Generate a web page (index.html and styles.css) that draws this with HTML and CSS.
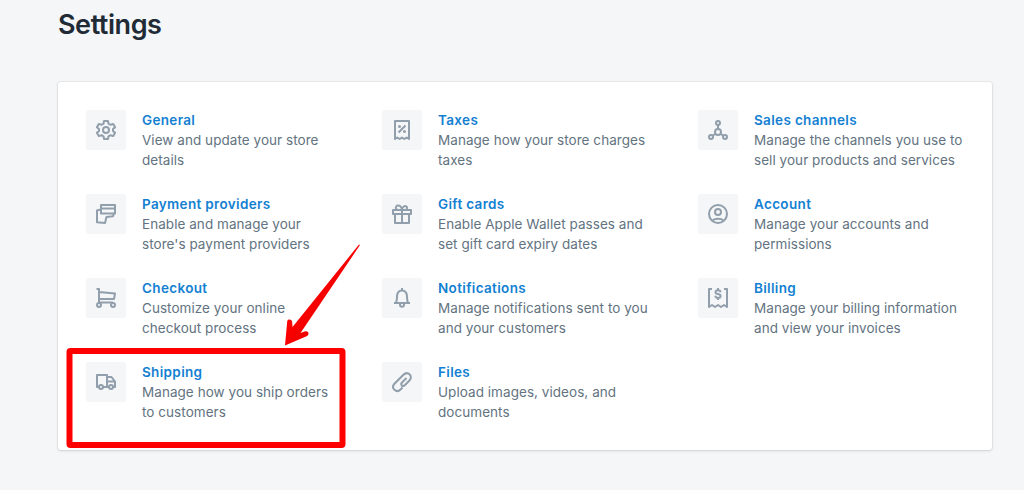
FILE: index.html
```html
<!DOCTYPE html>
<html lang="en">
<head>
<meta charset="utf-8">
<title>Settings</title>
<link rel="stylesheet" href="styles.css">
</head>
<body>
<main class="page">
  <h1 class="title">Settings</h1>
  <section class="card">
    <div class="column">
      <a class="item">
        <span class="tile"><svg class="icon" viewBox="0 0 20 20"><path d="M8 1h4l.5 2.700 2 1.100 2.700-.9 1.900 3.300-2.100 1.900v1.800l2.100 1.900-1.900 3.300-2.700-.9-2 1.100L12 19H8l-.5-2.700-2-1.100-2.700.9-1.900-3.300L3 10.900V9.100L.9 7.200l1.900-3.300 2.700.9 2-1.100z"/><circle cx="10" cy="10" r="3"/></svg></span>
        <span class="copy"><b class="name">General</b><span class="desc">View and update your store<br>details</span></span>
      </a>
      <a class="item">
        <span class="tile"><svg class="icon" viewBox="0 0 20 20"><path d="M5 1h14v8.500H5zM5 4.500h14M4.500 5.500L1 6.500V18.300l8 .7 1.500-6 6.500-.8 1-2.700"/></svg></span>
        <span class="copy"><b class="name">Payment providers</b><span class="desc">Enable and manage your<br>store's payment providers</span></span>
      </a>
      <a class="item">
        <span class="tile"><svg class="icon" viewBox="0 0 20 20"><path d="M.5 1H3v13.500h14M3 4l16 1.500-1 5.500H3"/><circle cx="3" cy="17" r="2"/><circle cx="17" cy="17" r="2"/></svg></span>
        <span class="copy"><b class="name">Checkout</b><span class="desc">Customize your online<br>checkout process</span></span>
      </a>
      <a class="item">
        <span class="tile"><svg class="icon" viewBox="0 0 20 20"><path d="M3 15H1V3h10v12H7M11 5h4.500L19 9.500V15h-2M11 9.500h8M11 15h2"/><circle cx="5" cy="15" r="2"/><circle cx="15" cy="15" r="2"/></svg></span>
        <span class="copy"><b class="name">Shipping</b><span class="desc">Manage how you ship orders<br>to customers</span></span>
      </a>
    </div>
    <div class="column">
      <a class="item">
        <span class="tile"><svg class="icon" viewBox="0 0 20 20"><path d="M3 19V1h14v18l-2.300-1.500L12.300 19 10 17.500 7.700 19l-2.400-1.500zM13.500 5.500l-7 7"/><circle class="dot" cx="7.500" cy="6.500" r="1.500"/><circle class="dot" cx="12.500" cy="11.500" r="1.500"/></svg></span>
        <span class="copy"><b class="name">Taxes</b><span class="desc">Manage how your store charges<br>taxes</span></span>
      </a>
      <a class="item">
        <span class="tile"><svg class="icon" viewBox="0 0 20 20"><path d="M1 6h18v4H1zM3 10v9h14v-9M10 6v13M10 6H6.500C4 6 3.500 4.500 4 3s2.500-2.200 4-1 2 2.500 2 4zM10 6c0-1.800.5-3 2-3.700s3.500.2 3 2.200c-.3 1-1 1.500-2 1.500z"/></svg></span>
        <span class="copy"><b class="name">Gift cards</b><span class="desc">Enable Apple Wallet passes and<br>set gift card expiry dates</span></span>
      </a>
      <a class="item">
        <span class="tile"><svg class="icon" viewBox="0 0 20 20"><path d="M10 0v2M2 15h16M4 15c.5-1.500 1-3 1-6 0-4 1.800-6.500 5-6.500S15 5 15 9c0 3 .5 4.500 1 6M8 15v1.500c0 3 4 3 4 0V15"/></svg></span>
        <span class="copy"><b class="name">Notifications</b><span class="desc">Manage notifications sent to you<br>and your customers</span></span>
      </a>
      <a class="item">
        <span class="tile"><svg class="icon" viewBox="0 0 20 20"><path d="M10.500 15.500l-2 2c-1.700 1.700-4 2-5.800.5-2-1.700-2.200-4-.5-6l9-9c2-2 4.500-2.400 6.300-.7 1.900 1.800 1.800 4.200-.1 6.200l-4.600 4.700c-1 1-2.300 1.100-3 .3s-.7-2 .2-3L14.500 6"/></svg></span>
        <span class="copy"><b class="name">Files</b><span class="desc">Upload images, videos, and<br>documents</span></span>
      </a>
    </div>
    <div class="column">
      <a class="item">
        <span class="tile"><svg class="icon" viewBox="0 0 20 20"><circle cx="10" cy="3" r="2"/><circle cx="10" cy="12" r="3"/><circle cx="3" cy="17" r="2"/><circle cx="17" cy="17" r="2"/><path d="M10 5v4M7.500 13.700l-2.900 2M12.500 13.700l2.900 2"/></svg></span>
        <span class="copy"><b class="name">Sales channels</b><span class="desc">Manage the channels you use to<br>sell your products and services</span></span>
      </a>
      <a class="item">
        <span class="tile"><svg class="icon" viewBox="0 0 20 20"><circle cx="10" cy="10" r="9"/><circle cx="10" cy="8" r="3"/><path d="M4.500 16.500C6 15.200 8 14.800 10 14.800s4 .4 5.500 1.700"/></svg></span>
        <span class="copy"><b class="name">Account</b><span class="desc">Manage your accounts and<br>permissions</span></span>
      </a>
      <a class="item">
        <span class="tile"><svg class="icon" viewBox="0 0 20 20"><path d="M4 1H1v18l3-2 3 2 3-2 3 2 3-2 3 2V1h-3M10 0v2M10 10v2M12.500 4.300C12.500 2.900 11.500 2.300 10 2.300S7.500 3 7.500 4.200C7.500 6.800 12.600 5.300 12.600 7.900c0 1.300-1.100 2-2.600 2s-2.600-.7-2.600-2.100"/></svg></span>
        <span class="copy"><b class="name">Billing</b><span class="desc">Manage your billing information<br>and view your invoices</span></span>
      </a>
    </div>
  </section>
</main>
<svg class="annotation" viewBox="0 0 1024 490">
  <defs><linearGradient id="arrow-fill" x1="0" y1="0" x2="1" y2="1"><stop offset=".4" stop-color="#f00"/><stop offset=".65" stop-color="#ea0000"/></linearGradient></defs>
  <rect x="69.500" y="351" width="273" height="94" rx="1" fill="none" stroke="#f00" stroke-width="6"/>
  <path d="M359 244.500q1.200 0 .5 1.300L300.500 333l4-1.500c4.500-1.500 5.500 3.500 1.500 5L285 345.500l2.200-24c.4-3 5-2.500 5 .8l.3 4.700z" fill="url(#arrow-fill)"/>
</svg>
</body>
</html>
```
FILE: styles.css
```css
body {
  margin: 0;
  height: 490px;
  overflow: hidden;
  background: #f4f6f8;
  font-family: Inter, "Liberation Sans", sans-serif;
  font-size: 13.5px;
  line-height: 20px;
  color: #637381;
}
.page {
  padding: 9px 32px 0 58px;
}
.title {
  margin: 0 0 41px;
  font-size: 27px;
  line-height: 32px;
  font-weight: 600;
  letter-spacing: -0.45px;
  color: #212b36;
}
.card {
  box-sizing: border-box;
  height: 368px;
  padding: 28px;
  display: grid;
  grid-template-columns: 296px 316px 1fr;
  background: #fff;
  border-radius: 3px;
  box-shadow: 0 0 0 1px rgba(63, 63, 68, 0.06), 0 1px 3px rgba(63, 63, 68, 0.16);
}
.column {
  display: flex;
  flex-direction: column;
  gap: 24px;
}
.item {
  display: flex;
  gap: 16px;
  height: 60px;
}
.tile {
  flex: none;
  display: grid;
  place-items: center;
  width: 40px;
  height: 40px;
  border-radius: 3px;
  background: #f4f6f8;
}
.icon {
  display: block;
  width: 20px;
  height: 20px;
  overflow: visible;
  fill: none;
  stroke: #919eab;
  stroke-width: 2;
  stroke-linejoin: round;
}
.dot {
  fill: #919eab;
  stroke: none;
}
.copy {
  white-space: nowrap;
}
.name {
  display: block;
  font-weight: 600;
  letter-spacing: 0.34px;
  color: #1380d2;
}
.desc {
  display: block;
  letter-spacing: 0.05px;
}
.annotation {
  position: absolute;
  left: 0;
  top: 0;
  width: 1024px;
  height: 490px;
}
```
